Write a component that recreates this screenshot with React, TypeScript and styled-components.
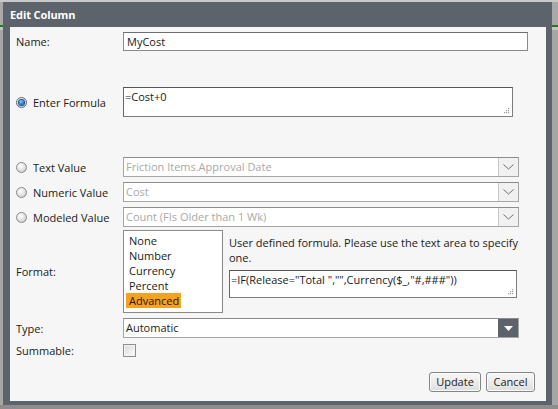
import React from "react";
import styled, { createGlobalStyle, css } from "styled-components";

const Global = createGlobalStyle`
  html, body { margin: 0; padding: 0; }
  body {
    width: 558px;
    height: 409px;
    overflow: hidden;
    font-family: "Open Sans", "Noto Sans", Arial, sans-serif;
    font-size: 11px;
    color: #1a1a1a;
    background:
      linear-gradient(to bottom,
        #c9c9c9 0px, #c9c9c9 2px,
        #a9a9a9 2px, #a9a9a9 25px,
        #1f7a22 25px, #1f7a22 27px,
        #c4c4c4 27px, #c4c4c4 30px,
        #a6a6a6 30px, #a6a6a6 405px,
        #8d8d8d 405px, #8d8d8d 409px);
  }
`;

const Page = styled.div`
  padding: 2px 6px 4px 3px;
`;

const Dialog = styled.div`
  width: 549px;
  height: 403px;
  box-sizing: border-box;
  background: #5c636b;
  padding: 0 6px 4px 7px;
  display: flex;
  flex-direction: column;
`;

const TitleBar = styled.div`
  height: 25px;
  display: flex;
  align-items: center;
  color: #ffffff;
  font-weight: 700;
  font-size: 11px;
  letter-spacing: -0.1px;
  flex: none;
`;

const Content = styled.div`
  flex: 1;
  background: #f6f6f6;
  padding: 5px 11px 0 6px;
  display: flex;
  flex-direction: column;
`;

const Row = styled.div<{ $mt?: number }>`
  display: grid;
  grid-template-columns: 107px auto;
  align-items: center;
  margin-top: ${(p) => p.$mt ?? 0}px;
`;

const Label = styled.div`
  line-height: 15px;
  color: #1a1a1a;
  white-space: nowrap;
`;

const RadioLabel = styled.label`
  display: flex;
  align-items: center;
  gap: 6px;
  line-height: 15px;
  white-space: nowrap;
`;

const RadioDot = styled.span<{ $checked?: boolean }>`
  width: 11px;
  height: 11px;
  box-sizing: border-box;
  border-radius: 50%;
  border: 1px solid #8b8b8b;
  background: radial-gradient(circle at 40% 35%, #ffffff 0%, #e6e6e6 45%, #bdbdbd 100%);
  display: inline-flex;
  align-items: center;
  justify-content: center;
  flex: none;
  ${(p) =>
    p.$checked &&
    css`
      border-color: #5a6a7a;
      &::after {
        content: "";
        width: 5px;
        height: 5px;
        border-radius: 50%;
        background: radial-gradient(circle at 40% 35%, #7fd0ff 0%, #1b7fd6 55%, #0a3f78 100%);
        box-shadow: 0 0 0 1px #1d4e7d;
      }
    `}
`;

const TextInput = styled.div`
  width: 405px;
  height: 19px;
  box-sizing: border-box;
  border: 1px solid #8a8a8a;
  border-top-color: #6e6e6e;
  background: #ffffff;
  padding: 0 3px;
  line-height: 17px;
  color: #1a1a1a;
`;

const TextArea = styled.div<{ $w: number; $h: number }>`
  position: relative;
  width: ${(p) => p.$w}px;
  height: ${(p) => p.$h}px;
  box-sizing: border-box;
  border: 1px solid #7d7d7d;
  border-top-color: #555;
  border-left-color: #666;
  background: #ffffff;
  padding: 1px 1px;
  line-height: 15px;
  color: #1a1a1a;
  white-space: nowrap;
  overflow: hidden;
`;

const Grip = styled.svg`
  position: absolute;
  right: 2px;
  bottom: 2px;
`;

const Select = styled.div<{ $dark?: boolean }>`
  width: 396px;
  height: 20px;
  box-sizing: border-box;
  border: 1px solid #a6a6a6;
  border-top-color: #8c8c8c;
  background: #ffffff;
  display: flex;
  align-items: stretch;
`;

const SelectText = styled.div<{ $disabled?: boolean }>`
  flex: 1;
  padding-left: 2px;
  line-height: 18px;
  color: ${(p) => (p.$disabled ? "#a9a9a9" : "#1a1a1a")};
  white-space: nowrap;
  overflow: hidden;
`;

const DropButton = styled.div<{ $dark?: boolean }>`
  width: 19px;
  display: flex;
  align-items: center;
  justify-content: center;
  background: ${(p) => (p.$dark ? "#5c636b" : "#f1f1f1")};
  border-left: 1px solid ${(p) => (p.$dark ? "#5c636b" : "#c9c9c9")};
`;

const FormatArea = styled.div`
  display: flex;
  gap: 6px;
`;

const ListBox = styled.div`
  width: 100px;
  height: 83px;
  box-sizing: border-box;
  border: 1px solid #8a8a8a;
  background: #ffffff;
  padding: 2px 2px 0 2px;
  display: flex;
  flex-direction: column;
`;

const ListItem = styled.span<{ $selected?: boolean }>`
  align-self: flex-start;
  line-height: 15px;
  height: 15px;
  padding: 0 2px 0 3px;
  color: #1a1a1a;
  background: ${(p) => (p.$selected ? "#f8a01f" : "transparent")};
`;

const FormatRight = styled.div`
  display: flex;
  flex-direction: column;
  padding-top: 5px;
`;

const Hint = styled.div`
  line-height: 15px;
  width: 300px;
  color: #1a1a1a;
  margin-bottom: 5px;
`;

const CheckBox = styled.span`
  width: 13px;
  height: 13px;
  box-sizing: border-box;
  border: 1px solid #8e8e8e;
  background: linear-gradient(135deg, #d8d8d8 0%, #f2f2f2 70%, #fbfbfb 100%);
  box-shadow: inset 0 0 0 1px #f4f4f4;
  display: block;
`;

const ButtonBar = styled.div`
  display: flex;
  justify-content: flex-end;
  gap: 5px;
  margin-top: 14px;
`;

const Button = styled.button<{ $w: number }>`
  width: ${(p) => p.$w}px;
  height: 20px;
  box-sizing: border-box;
  padding: 0;
  border: 1px solid #858585;
  border-radius: 3px;
  background: linear-gradient(to bottom, #f8f8f8 0%, #ececec 50%, #dedede 100%);
  box-shadow: inset 0 0 0 1px #fbfbfb;
  font-family: "Open Sans", "Noto Sans", Arial, sans-serif;
  font-size: 11px;
  color: #1a1a1a;
  line-height: 18px;
`;

const ResizeGrip = () => (
  <Grip width="6" height="6" viewBox="0 0 6 6">
    {[
      [4, 0],
      [2, 2],
      [4, 2],
      [0, 4],
      [2, 4],
      [4, 4],
    ].map(([x, y]) => (
      <rect key={`${x}-${y}`} x={x} y={y} width="1.2" height="1.2" fill="#9a9a9a" />
    ))}
  </Grip>
);

const Chevron = () => (
  <svg width="11" height="6" viewBox="0 0 11 6">
    <polyline points="0.5,0.5 5.5,5 10.5,0.5" fill="none" stroke="#6f6f6f" strokeWidth="1" />
  </svg>
);

const Triangle = () => (
  <svg width="9" height="5" viewBox="0 0 9 5">
    <polygon points="0,0 9,0 4.5,5" fill="#ffffff" />
  </svg>
);

const DisabledSelect = ({ text }: { text: string }) => (
  <Select>
    <SelectText $disabled>{text}</SelectText>
    <DropButton>
      <Chevron />
    </DropButton>
  </Select>
);

export default function App() {
  return (
    <>
      <Global />
      <Page>
        <Dialog>
          <TitleBar>Edit Column</TitleBar>
          <Content>
            <Row>
              <Label>Name:</Label>
              <TextInput>MyCost</TextInput>
            </Row>
            <Row $mt={36}>
              <RadioLabel>
                <RadioDot $checked />
                Enter Formula
              </RadioLabel>
              <TextArea $w={390} $h={30}>
                =Cost+0
                <ResizeGrip />
              </TextArea>
            </Row>
            <Row $mt={40}>
              <RadioLabel>
                <RadioDot />
                Text Value
              </RadioLabel>
              <DisabledSelect text="Friction Items.Approval Date" />
            </Row>
            <Row $mt={5}>
              <RadioLabel>
                <RadioDot />
                Numeric Value
              </RadioLabel>
              <DisabledSelect text="Cost" />
            </Row>
            <Row $mt={5}>
              <RadioLabel>
                <RadioDot />
                Modeled Value
              </RadioLabel>
              <DisabledSelect text="Count (FIs Older than 1 Wk)" />
            </Row>
            <Row $mt={3}>
              <Label>Format:</Label>
              <FormatArea>
                <ListBox>
                  <ListItem>None</ListItem>
                  <ListItem>Number</ListItem>
                  <ListItem>Currency</ListItem>
                  <ListItem>Percent</ListItem>
                  <ListItem $selected>Advanced</ListItem>
                </ListBox>
                <FormatRight>
                  <Hint>User defined formula. Please use the text area to specify one.</Hint>
                  <TextArea $w={288} $h={28}>
                    =IF(Release="Total ","",Currency($_,"#,###"))
                    <ResizeGrip />
                  </TextArea>
                </FormatRight>
              </FormatArea>
            </Row>
            <Row $mt={5}>
              <Label>Type:</Label>
              <Select>
                <SelectText>Automatic</SelectText>
                <DropButton $dark>
                  <Triangle />
                </DropButton>
              </Select>
            </Row>
            <Row $mt={5}>
              <Label>Summable:</Label>
              <CheckBox />
            </Row>
            <ButtonBar>
              <Button $w={52}>Update</Button>
              <Button $w={49}>Cancel</Button>
            </ButtonBar>
          </Content>
        </Dialog>
      </Page>
    </>
  );
}
